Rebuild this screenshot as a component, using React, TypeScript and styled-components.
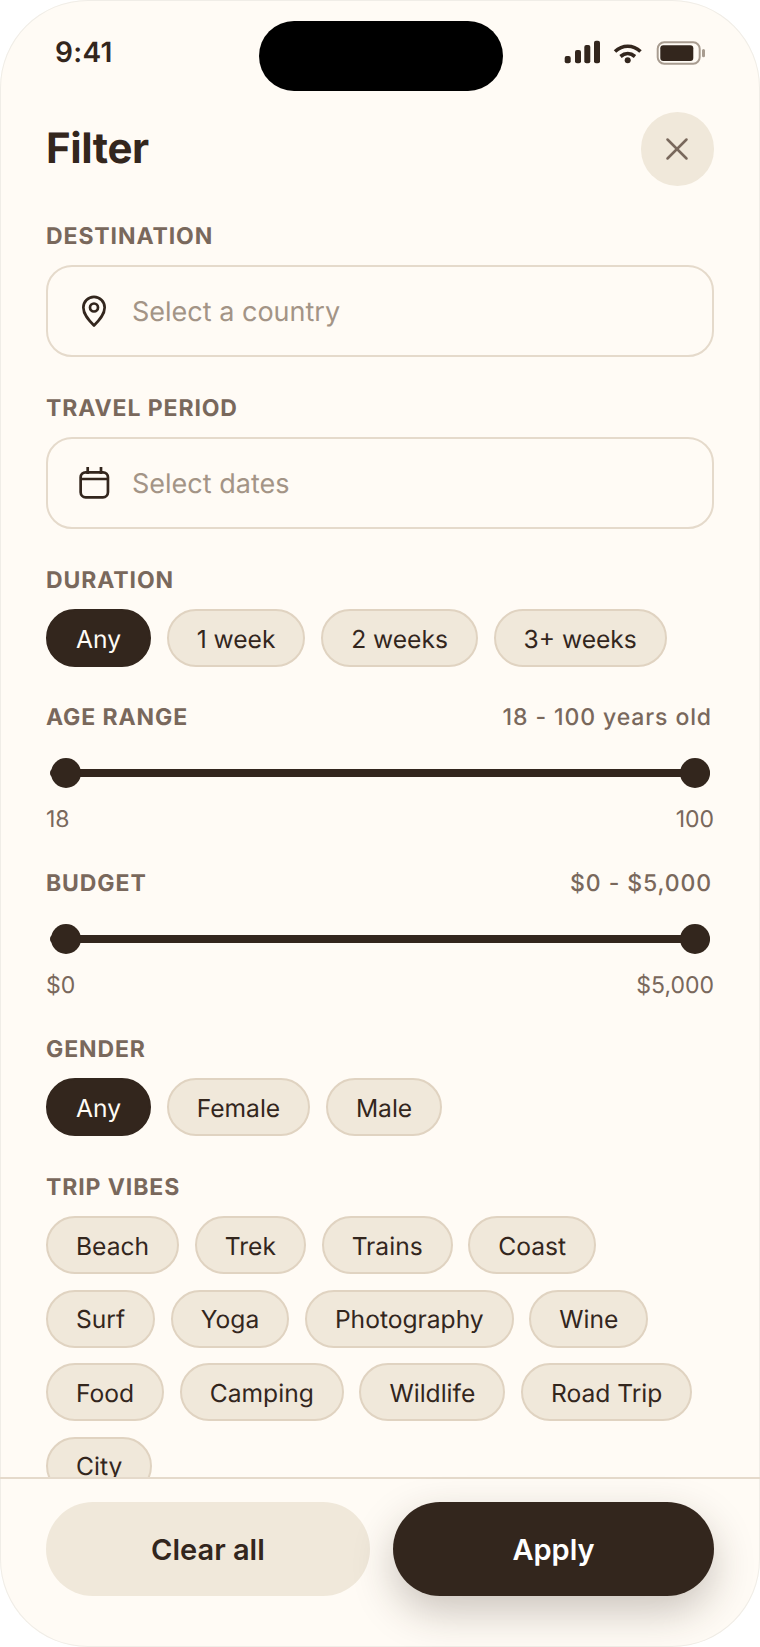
import styled, { createGlobalStyle } from "styled-components";
import { X } from "lucide-react";

const GlobalStyle = createGlobalStyle`
  html, body {
    margin: 0;
    padding: 0;
    background: #ffffff;
    text-rendering: geometricPrecision;
  }
  * {
    box-sizing: border-box;
  }
`;

const Phone = styled.div`
  width: 760px;
  height: 1647px;
  background: #fffbf5;
  border-radius: 88px;
  box-shadow: inset 0 0 0 1px #f0ede7;
  overflow: hidden;
  position: relative;
  display: flex;
  flex-direction: column;
  font-family: Inter, "Liberation Sans", sans-serif;
  color: #33261d;
`;

const StatusBar = styled.div`
  height: 112px;
  flex-shrink: 0;
  padding: 35px 54px 0 55px;
  display: flex;
  justify-content: space-between;
  align-items: flex-start;
`;

const Time = styled.span`
  font-size: 28px;
  line-height: 34px;
  font-weight: 600;
  letter-spacing: 0.3px;
`;

const Island = styled.div`
  position: absolute;
  top: 21px;
  left: 259px;
  width: 244px;
  height: 70px;
  border-radius: 35px;
  background: #000000;
`;

const StatusIcons = styled.svg`
  display: block;
  margin-top: 5px;
`;

const Content = styled.div`
  flex: 1;
  min-height: 0;
  overflow: hidden;
  padding: 0 46px;
  display: flex;
  flex-direction: column;
  gap: 36px;
`;

const Header = styled.div`
  height: 73px;
  display: flex;
  justify-content: space-between;
  align-items: flex-start;
`;

const Title = styled.h1`
  margin: 11px 0 0;
  font-size: 42px;
  line-height: 52px;
  font-weight: 700;
  letter-spacing: -0.4px;
`;

const CloseButton = styled.button`
  width: 73.5px;
  height: 73.5px;
  margin-bottom: -0.5px;
  border: none;
  padding: 0;
  border-radius: 50%;
  background: #f0e8da;
  color: #79685c;
  display: flex;
  align-items: center;
  justify-content: center;
`;

const Section = styled.section`
  display: flex;
  flex-direction: column;
  gap: 15px;
`;

const SliderSection = styled.section`
  display: flex;
  flex-direction: column;
`;

const LabelRow = styled.div`
  margin-top: -1px;
  display: flex;
  justify-content: space-between;
  align-items: flex-end;
`;

const Label = styled.div`
  padding-top: 1px;
  font-size: 23px;
  line-height: 28px;
  font-weight: 700;
  letter-spacing: 0.9px;
  color: #79685c;
`;

const RangeText = styled.div`
  font-size: 23px;
  line-height: 28px;
  font-weight: 500;
  letter-spacing: 0.9px;
  color: #79685c;
  margin-right: 2px;
`;

const Field = styled.div`
  height: 92px;
  border: 2px solid #e5dacb;
  border-radius: 26px;
  padding: 0 26px;
  display: flex;
  align-items: center;
  gap: 18px;
`;

const FieldIcon = styled.svg`
  display: block;
  flex-shrink: 0;
`;

const Placeholder = styled.span`
  font-size: 27px;
  font-weight: 400;
  color: #a39486;
`;

const Chips = styled.div`
  display: flex;
  flex-wrap: wrap;
  gap: 15.5px 15.7px;
`;

const Chip = styled.div<{ $active?: boolean }>`
  height: 58px;
  padding: 1px 28px 0;
  border-radius: 29px;
  border: 2px solid ${(p) => (p.$active ? "#33261d" : "#e0d3c1")};
  background: ${(p) => (p.$active ? "#33261d" : "#f0e8da")};
  color: ${(p) => (p.$active ? "#fffbf5" : "#33261d")};
  font-size: 24.6px;
  font-weight: 400;
  display: flex;
  align-items: center;
`;

const Slider = styled.div`
  position: relative;
  height: 30px;
  margin-top: 27px;
  padding: 0 4px;
  display: flex;
  align-items: center;
`;

const Track = styled.div`
  flex: 1;
  height: 8px;
  border-radius: 4px;
  background: #33261d;
`;

const Thumb = styled.div<{ $side: "left" | "right" }>`
  position: absolute;
  top: 0;
  ${(p) => (p.$side === "left" ? "left: 5px;" : "right: 4px;")}
  width: 30px;
  height: 30px;
  border-radius: 50%;
  background: #33261d;
`;

const Bounds = styled.div`
  margin: 17px 0 -0.5px;
  display: flex;
  justify-content: space-between;
  font-size: 23px;
  line-height: 28px;
  color: #79685c;
`;

const Footer = styled.div`
  height: 170px;
  flex-shrink: 0;
  border-top: 2px solid #e5dacb;
  padding: 23px 46px 0;
  display: flex;
  gap: 23px;
  align-items: flex-start;
`;

const FooterButton = styled.button<{ $primary?: boolean }>`
  flex: ${(p) => (p.$primary ? "321 1 0" : "324 1 0")};
  height: 94px;
  border: none;
  border-radius: 47px;
  font-family: inherit;
  font-size: 29px;
  font-weight: 600;
  background: ${(p) => (p.$primary ? "#33261d" : "#f0e8da")};
  color: ${(p) => (p.$primary ? "#ffffff" : "#33261d")};
  box-shadow: ${(p) => (p.$primary ? "0 16px 40px rgba(51, 38, 29, 0.25)" : "none")};
`;

const durations = ["Any", "1 week", "2 weeks", "3+ weeks"];
const genders = ["Any", "Female", "Male"];
const vibes = [
  "Beach",
  "Trek",
  "Trains",
  "Coast",
  "Surf",
  "Yoga",
  "Photography",
  "Wine",
  "Food",
  "Camping",
  "Wildlife",
  "Road Trip",
  "City",
];

const ChipGroup = ({ items, active }: { items: string[]; active?: string }) => (
  <Chips>
    {items.map((item) => (
      <Chip key={item} $active={item === active}>
        {item}
      </Chip>
    ))}
  </Chips>
);

const RangeSlider = ({
  label,
  range,
  min,
  max,
}: {
  label: string;
  range: string;
  min: string;
  max: string;
}) => (
  <SliderSection>
    <LabelRow>
      <Label>{label}</Label>
      <RangeText>{range}</RangeText>
    </LabelRow>
    <Slider>
      <Track />
      <Thumb $side="left" />
      <Thumb $side="right" />
    </Slider>
    <Bounds>
      <span>{min}</span>
      <span>{max}</span>
    </Bounds>
  </SliderSection>
);

const App = () => {
  return (
    <>
      <GlobalStyle />
      <Phone>
        <Island />
        <StatusBar>
          <Time>9:41</Time>
          <StatusIcons width="142" height="26" viewBox="0 0 142 26" fill="none">
            {/* signal */}
            <rect x="0.7" y="16" width="6" height="7.3" rx="2" fill="#33261d" />
            <rect x="11" y="10" width="6" height="13.3" rx="2" fill="#33261d" />
            <rect x="20.3" y="5" width="6" height="18.3" rx="2" fill="#33261d" />
            <rect x="30" y="0.7" width="6" height="22.6" rx="2" fill="#33261d" />
            {/* wifi */}
            <path d="M51 11.5C58.5 4.5 69 4.5 76.5 11.5" stroke="#33261d" strokeWidth="3.6" />
            <path d="M56.5 16.5c4.5-3.8 10-3.8 14.5 0" stroke="#33261d" strokeWidth="3.6" />
            <circle cx="63.7" cy="20.3" r="3" fill="#33261d" />
            {/* battery */}
            <rect x="93.7" y="2.3" width="42" height="21.4" rx="6.5" stroke="#a89c90" strokeWidth="2" />
            <rect x="96.3" y="5.3" width="33" height="15.7" rx="3" fill="#33261d" />
            <rect x="138" y="9" width="3" height="8.3" rx="1.5" fill="#a89c90" />
          </StatusIcons>
        </StatusBar>
        <Content>
          <Header>
            <Title>Filter</Title>
            <CloseButton aria-label="Close">
              <X size={38} strokeWidth={1.6} />
            </CloseButton>
          </Header>
          <Section>
            <Label>DESTINATION</Label>
            <Field>
              <FieldIcon width="40" height="40" viewBox="0 0 40 40" fill="none" stroke="#33261d" strokeWidth="2.7">
                <path
                  d="M20 34.5c-5.5-5.5-10.65-11-10.65-18a10.65 10.65 0 0 1 21.3 0c0 7-5.15 12.5-10.65 18Z"
                  strokeLinejoin="round"
                />
                <circle cx="20" cy="16.5" r="4" />
              </FieldIcon>
              <Placeholder>Select a country</Placeholder>
            </Field>
          </Section>
          <Section>
            <Label>TRAVEL PERIOD</Label>
            <Field>
              <FieldIcon width="40" height="40" viewBox="0 0 40 40" fill="none" stroke="#33261d" strokeWidth="2.7">
                <rect x="6.65" y="9.35" width="27.3" height="25" rx="5" />
                <path d="M6.65 16h27.3M13.7 4v7M27 4v7" />
              </FieldIcon>
              <Placeholder>Select dates</Placeholder>
            </Field>
          </Section>
          <Section>
            <Label>DURATION</Label>
            <ChipGroup items={durations} active="Any" />
          </Section>
          <RangeSlider label="AGE RANGE" range="18 - 100 years old" min="18" max="100" />
          <RangeSlider label="BUDGET" range="$0 - $5,000" min="$0" max="$5,000" />
          <Section>
            <Label>GENDER</Label>
            <ChipGroup items={genders} active="Any" />
          </Section>
          <Section>
            <Label>TRIP VIBES</Label>
            <ChipGroup items={vibes} />
          </Section>
        </Content>
        <Footer>
          <FooterButton>Clear all</FooterButton>
          <FooterButton $primary>Apply</FooterButton>
        </Footer>
      </Phone>
    </>
  );
};

export default App;
